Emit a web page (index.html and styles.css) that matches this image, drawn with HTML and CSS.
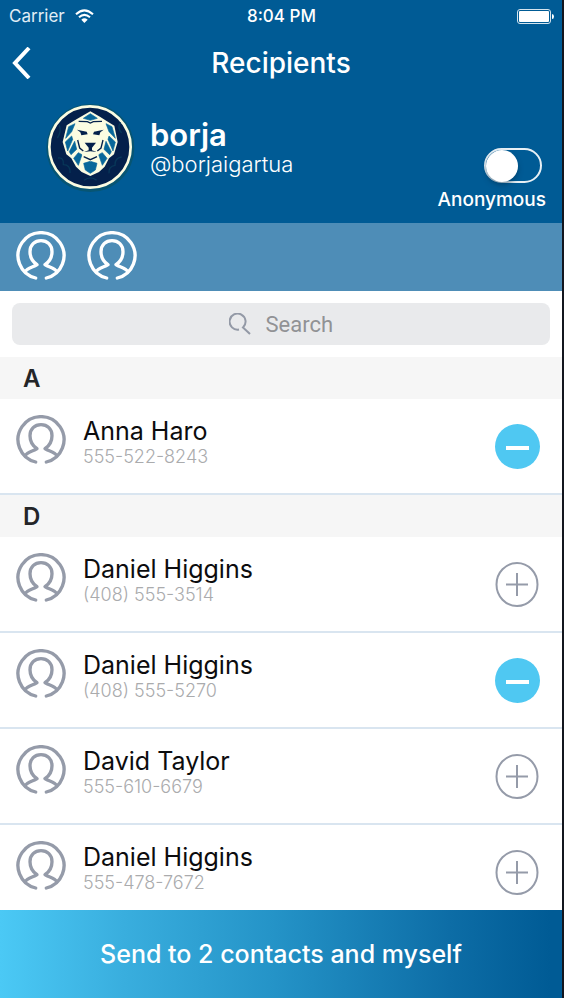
FILE: index.html
```html
<!DOCTYPE html>
<html lang="en">
<head>
<meta charset="utf-8">
<meta name="viewport" content="width=device-width, initial-scale=1">
<title>Recipients</title>
<link rel="stylesheet" href="styles.css">
</head>
<body>
<svg class="defs" aria-hidden="true">
  <symbol id="person" viewBox="0 0 150 150">
    <g fill="none" stroke="currentColor" stroke-width="10" stroke-linecap="round" stroke-linejoin="round">
      <path d="M59 141A69 69 0 1 1 91 141"/>
      <path d="M28 122C34 110 52 109 63 101C48 91 42 80 42 62C42 42 56 29 75 29C94 29 108 42 108 62C108 80 102 91 87 101C98 109 116 110 122 122"/>
    </g>
  </symbol>
  <symbol id="plus" viewBox="0 0 45 45">
    <g fill="none" stroke="currentColor" stroke-width="2">
      <ellipse cx="22" cy="22.500" rx="20.500" ry="21.500"/>
      <path d="M11 22.500H33M22 11V34"/>
    </g>
  </symbol>
  <symbol id="minus" viewBox="0 0 45 45">
    <circle cx="22.500" cy="22.500" r="22.500" fill="#4fc8f2"/>
    <path d="M11 24H34" stroke="#fff" stroke-width="4"/>
  </symbol>
</svg>
<header class="header">
  <div class="status">
    <span class="carrier">Carrier
      <svg class="wifi" viewBox="0 0 57 42" aria-hidden="true"><g fill="none" stroke="#fff" stroke-width="6"><path d="M3 16Q28 -8 54 16"/><path d="M12 25Q28 10 45 25"/></g><path d="M19 32Q28 24 38 32L28 42Z" fill="#fff"/></svg>
    </span>
    <time>8:04 PM</time>
    <svg class="battery" viewBox="0 0 37 15" aria-hidden="true"><rect x=".5" y=".5" width="33" height="14" rx="2.500" fill="none" stroke="#d5e4ee"/><rect x="2" y="2" width="30" height="11" rx="1" fill="#fff"/><path d="M35 5Q37 5 37 7.500Q37 10 35 10Z" fill="#fff"/></svg>
  </div>
  <div class="titlebar">
    <button class="back" type="button" aria-label="Back"><svg viewBox="0 0 20 32" aria-hidden="true"><path d="M18 1L4 16L18 31" fill="none" stroke="#fff" stroke-width="4"/></svg></button>
    <h1>Recipients</h1>
  </div>
  <div class="profile">
    <svg class="lion" viewBox="18 15 267 267" aria-hidden="true">
      <circle cx="151" cy="150" r="132" fill="#075573"/>
      <circle cx="150" cy="147" r="122" fill="#04204b" stroke="#fbfce2" stroke-width="8"/>
      <path d="M52 120Q65 102 58 82M245 105Q230 88 242 73M54 180Q72 177 70 200Q92 200 90 225M245 177Q224 180 225 202Q205 205 207 226M132 247Q152 232 170 247" fill="none" stroke="#073658" stroke-width="4"/>
      <path d="M151 40L181 57L201 70L223 83L233 132L222 169L207 181L194 206L177 222L151 234L125 222L108 206L94 181L79 169L68 132L80 82L102 68L121 57Z" fill="#fbfce2"/>
      <g fill="#08679a" stroke="#08679a" stroke-width="2" stroke-linejoin="round">
        <path d="M151 47L172 61L151 67L130 61Z"/>
        <path d="M86 86L105 77L95 101L77 121Z"/>
        <path d="M216 86L198 77L207 101L226 121Z"/>
        <path d="M76 132L95 114L98 124L83 159Z"/>
        <path d="M226 132L207 114L204 124L219 159Z"/>
        <path d="M104 130L110 154L93 170L88 161Z"/>
        <path d="M198 130L192 154L209 170L214 161Z"/>
        <path d="M101 181L115 164L126 170L115 202Z"/>
        <path d="M201 181L187 164L176 170L187 202Z"/>
        <path d="M131 196L151 190L171 196L166 216L151 226L136 216Z"/>
      </g>
      <path d="M112 76L142 74L151 79L160 74L190 76L200 101L191 139L180 155L171 183L151 190L131 183L122 155L111 139L102 101Z" fill="#fbfce2"/>
      <g fill="#04204b"><path d="M111 95L140 101L143 109L124 112L121 103ZM191 95L162 101L159 109L178 112L181 103Z"/><path d="M134 134H168L156 149V157L170 162L151 160L132 162L146 157V149Z"/></g>
      <path d="M113 126L119 150L130 159M189 126L183 150L172 159M131 176L151 185L171 176M116 70L142 71L151 75L160 71L186 70" fill="none" stroke="#04204b" stroke-width="4"/>
    </svg>
    <div class="identity">
      <p class="display-name">borja</p>
      <p class="handle">@borjaigartua</p>
    </div>
    <label class="anonymous">
      <input type="checkbox" role="switch">
      <span>Anonymous</span>
    </label>
  </div>
</header>
<div class="selected">
  <svg class="avatar" role="img" aria-label="Anna Haro"><use href="#person"/></svg>
  <svg class="avatar" role="img" aria-label="Daniel Higgins"><use href="#person"/></svg>
</div>
<div class="searchbar">
  <label class="search">
    <svg viewBox="0 0 22 22" aria-hidden="true"><path d="M10 16.500A8 8 0 1 1 14 14.500L21 21" fill="none" stroke="#9399a6" stroke-width="2"/></svg>
    <input type="search" placeholder="Search" aria-label="Search">
  </label>
</div>
<main class="contacts">
  <section>
    <h2>A</h2>
    <ul>
      <li class="contact"><svg class="avatar" aria-hidden="true"><use href="#person"/></svg><div class="details"><p class="name">Anna Haro</p><p class="phone">555-522-8243</p></div><button class="toggle" type="button" aria-label="Remove"><svg aria-hidden="true"><use href="#minus"/></svg></button></li>
    </ul>
  </section>
  <section>
    <h2>D</h2>
    <ul>
      <li class="contact"><svg class="avatar" aria-hidden="true"><use href="#person"/></svg><div class="details"><p class="name">Daniel Higgins</p><p class="phone">(408) 555-3514</p></div><button class="toggle" type="button" aria-label="Add"><svg aria-hidden="true"><use href="#plus"/></svg></button></li>
      <li class="contact"><svg class="avatar" aria-hidden="true"><use href="#person"/></svg><div class="details"><p class="name">Daniel Higgins</p><p class="phone">(408) 555-5270</p></div><button class="toggle" type="button" aria-label="Remove"><svg aria-hidden="true"><use href="#minus"/></svg></button></li>
      <li class="contact"><svg class="avatar" aria-hidden="true"><use href="#person"/></svg><div class="details"><p class="name">David Taylor</p><p class="phone">555-610-6679</p></div><button class="toggle" type="button" aria-label="Add"><svg aria-hidden="true"><use href="#plus"/></svg></button></li>
      <li class="contact"><svg class="avatar" aria-hidden="true"><use href="#person"/></svg><div class="details"><p class="name">Daniel Higgins</p><p class="phone">555-478-7672</p></div><button class="toggle" type="button" aria-label="Add"><svg aria-hidden="true"><use href="#plus"/></svg></button></li>
    </ul>
  </section>
</main>
<button class="send" type="button">Send to 2 contacts and myself</button>
<div class="scroll-thumb"></div>
</body>
</html>
```
FILE: styles.css
```css
* { box-sizing: border-box; }
body {
  position: relative;
  display: flex;
  flex-direction: column;
  height: 100vh;
  margin: 0;
  overflow: hidden;
  border-right: 2px solid #13161e;
  background: #fff;
  color: #0c0c0e;
  font-family: Inter, "Liberation Sans", sans-serif;
}
h1, h2, p, ul { margin: 0; padding: 0; }
ul { list-style: none; }
button { padding: 0; border: 0; background: none; color: inherit; font: inherit; }
svg { display: block; flex: none; }
.defs { position: absolute; width: 0; height: 0; }

.header { flex: none; background: #005b95; color: #fff; }
.status {
  display: grid;
  grid-template-columns: 1fr auto 1fr;
  align-items: center;
  height: 32px;
  padding: 0 8px 0 9px;
  font-size: 17px;
}
.carrier { display: flex; align-items: center; gap: 10px; color: #e0edf5; }
.status time { font-weight: 500; }
.wifi { width: 19px; height: 14px; }
.battery { justify-self: end; width: 37px; height: 15px; }
.titlebar {
  display: grid;
  grid-template-columns: 1fr auto 1fr;
  align-items: center;
  height: 62px;
  padding: 0 11px;
}
.back { justify-self: start; }
.back svg { width: 20px; height: 32px; }
.titlebar h1 { font-size: 28px; font-weight: 500; line-height: 32px; }
.profile { display: flex; height: 129px; padding: 9px 16px 0 46px; }
.lion { width: 89px; height: 89px; }
.identity { flex: 1; padding: 15px 0 0 15px; }
.display-name { font-size: 31px; font-weight: 600; line-height: 34px; }
.handle { font-size: 22px; font-weight: 300; line-height: 24px; }
.anonymous {
  display: flex;
  flex-direction: column;
  align-items: flex-end;
  gap: 6px;
  padding-top: 45px;
  font-size: 19px;
  font-weight: 500;
  line-height: 22px;
}
.anonymous input {
  display: flex;
  width: 58px;
  height: 35px;
  margin: 0 4px 0 0;
  border: 2px solid #e8f0f5;
  border-radius: 18px;
  appearance: none;
}
.anonymous input::before {
  content: "";
  width: 32px;
  height: 32px;
  border-radius: 50%;
  background: #fff;
  box-shadow: 0 3px 5px #00305080;
}
.anonymous input:checked { justify-content: flex-end; }

.selected { display: flex; flex: none; gap: 21px; height: 68px; padding: 8px 16px; background: #4e8db7; color: #fff; }
.avatar { width: 50px; height: 50px; }
.searchbar { flex: none; padding: 12px; }
.search {
  display: flex;
  align-items: center;
  justify-content: center;
  gap: 15px;
  height: 42px;
  border-radius: 8px;
  background: #e9eaec;
}
.search svg { width: 22px; height: 22px; }
.search input { width: 68px; padding: 0; border: 0; outline: 0; background: none; font: 22px Roboto, sans-serif; appearance: none; }
.search input::-webkit-search-cancel-button { display: none; }
.search input::placeholder { color: #919295; opacity: 1; }

.contacts { flex: 1; min-height: 0; overflow: hidden; }
.contacts h2 { height: 42px; padding-left: 23px; background: #f6f6f6; color: #242528; font-size: 24px; font-weight: 600; line-height: 44px; }
.contact { display: flex; height: 96px; padding: 16px 22px 0 16px; border-bottom: 2px solid #d9e5f0; }
.contact .avatar { color: #959ba9; }
.details { flex: 1; padding-left: 17px; }
.name { font-size: 25px; line-height: 32px; }
.phone { color: #aaabad; font-size: 18px; font-weight: 300; line-height: 20px; }
.toggle { align-self: flex-start; margin-top: 9px; color: #959ba9; }
.toggle svg { width: 45px; height: 45px; }
.send {
  flex: none;
  height: 88px;
  background: linear-gradient(90deg, #4bc9f5, #39aede 22%, #2493c7 49%, #0d6da6 80%, #005b95 98%);
  color: #fff;
  font-size: 25px;
  font-weight: 500;
}
.scroll-thumb { position: absolute; right: -2px; bottom: 124px; width: 2px; height: 60px; background: #a8a8a8; }
```
